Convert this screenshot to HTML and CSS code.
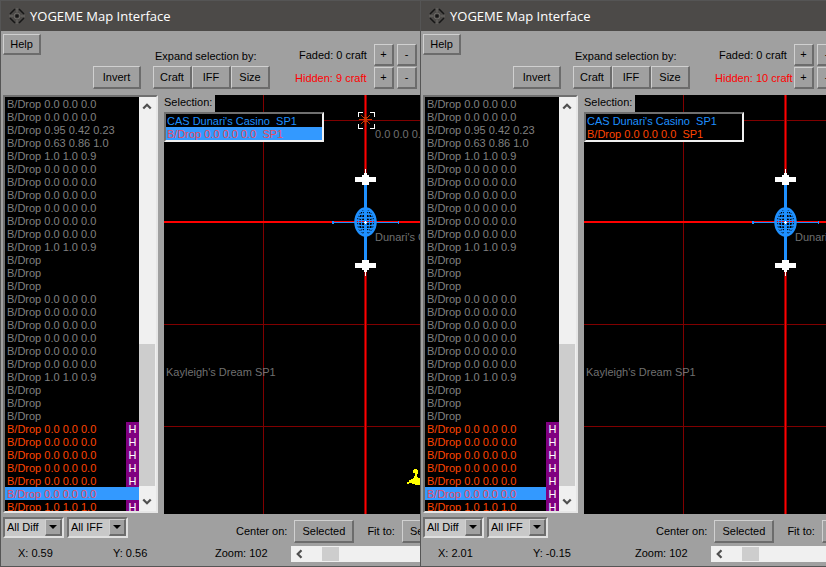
FILE: index.html
```
<!DOCTYPE html>
<html lang="en">
<head>
<meta charset="utf-8">
<title>YOGEME Map Interface</title>
<link rel="stylesheet" href="styles.css">
</head>
<body>
<svg width="0" height="0" class="defs" aria-hidden="true">
  <defs>
    <symbol id="logo" viewBox="0 0 16 16">
      <g fill="none" stroke="#161616" stroke-width="1.500">
        <path d="M6 1 L1 6 M10 1 L15 6 M1 10 L6 15 M15 10 L10 15"/>
      </g>
      <path d="M8 0v4M8 12v4M0 8h4M12 8h4" stroke="#6c6a66"/>
      <circle cx="8" cy="8" r="3" fill="none" stroke="#6c6a66"/>
      <circle cx="8" cy="8" r="1.800" fill="#161616"/>
    </symbol>
    <symbol id="chevron" viewBox="0 0 8 6"><path d="M1 5 L4 2 L7 5" fill="none" stroke="#505050" stroke-width="1.800"/></symbol>
    <symbol id="grid" viewBox="0 0 256 419">
      <g shape-rendering="crispEdges">
        <path d="M99.500 0V419M0 25.500H256M0 229.500H256M0 331.500H256" stroke="#800000"/>
        <path d="M201.500 0V419" stroke="#8b0000" stroke-width="3"/>
        <path d="M201.500 0V419" stroke="#f00"/>
        <path d="M0 127H256" stroke="#f00" stroke-width="2"/>
      </g>
    </symbol>
    <symbol id="station" viewBox="0 0 68 108">
      <g shape-rendering="crispEdges">
        <path d="M1 53.500H67" stroke="#1e90ff"/>
        <path d="M0 52h2v3h-2zM66 52h1v3h-1z" fill="#1e90ff"/>
        <path d="M33.500 12V94" stroke="#1e90ff" stroke-width="3"/>
        <path d="M23 8h7v-2h2v-2h3v2h2v2h7v5h-7v3h-7v-3h-7zM33 0h1v5h-1zM23 94h7v-3h7v3h7v5h-7v2h-2v2h-3v-2h-2v-2h-7zM33 102h1v5h-1z" fill="#fff"/>
      </g>
      <g fill="none" stroke="#1e90ff">
        <ellipse cx="33.500" cy="53" rx="10" ry="13.500" stroke-width="2.500"/>
        <ellipse cx="33.500" cy="53" rx="7" ry="14"/>
        <ellipse cx="33.500" cy="53" rx="4" ry="14"/>
        <ellipse cx="33.500" cy="53" rx="10" ry="4"/>
        <ellipse cx="33.500" cy="53" rx="10" ry="9"/>
        <path d="M26 42.500H41M25 45.500H42M24 48.500H43M24 51.500H43M24 56.500H43M25 59.500H42M26 62.500H41" shape-rendering="crispEdges"/>
      </g>
      <path d="M33 52h1v1h1v1h-1v1h-1v-1h-1v-1h1z" fill="#fff"/>
    </symbol>
  </defs>
</svg>
<main class="desk" id="desk"></main>
<template id="window">
  <section class="window">
    <header class="title"><svg class="logo"><use href="#logo"/></svg><h1>YOGEME Map Interface</h1></header>
    <div class="toolbar">
      <div class="left-tools"><button class="help">Help</button><button class="wide">Invert</button></div>
      <div class="expand"><span>Expand selection by:</span><div class="buttons"><button>Craft</button><button>IFF</button><button>Size</button></div></div>
      <div class="counts">
        <span class="faded">Faded: 0 craft</span><button>+</button><button>-</button>
        <span class="hidden-count"></span><button>+</button><button>-</button>
      </div>
    </div>
    <div class="content">
      <div class="list">
        <ul class="rows craft"></ul>
        <div class="scroll"><svg class="arrow"><use href="#chevron"/></svg><div class="thumb"></div><svg class="arrow down"><use href="#chevron"/></svg></div>
      </div>
      <div class="map">
        <svg class="canvas" width="256" height="419"></svg>
        <div class="selection"><span>Selection:</span><ul class="rows picked"><li class="blue">CAS Dunari's Casino&nbsp; SP1</li><li class="red">B/Drop 0.0 0.0 0.0&nbsp; SP1</li></ul></div>
      </div>
    </div>
    <footer>
      <div class="filters">
        <div class="combo"><select aria-label="Difficulty"><option>All Diff</option></select><i></i></div>
        <div class="combo"><select aria-label="IFF"><option>All IFF</option></select><i></i></div>
      </div>
      <div class="view"><span>Center on:</span><button>Selected</button><span class="fit">Fit to:</span><button>Selected</button></div>
      <div class="coords"><span class="x"></span><span class="y"></span></div>
      <div class="zoom"><span>Zoom: 102</span><div class="hscroll"><svg class="arrow back"><use href="#chevron"/></svg><div class="thumb"></div></div></div>
    </footer>
  </section>
</template>
<script src="app.js"></script>
</body>
</html>
```
FILE: styles.css
```
* { box-sizing: border-box; }
body { margin: 0; background: #a0a0a0; color: #000; font: 11px/13px "Liberation Sans", Arial, sans-serif; }
.defs { position: absolute; }
.desk { display: grid; grid-template-columns: 420fr 406fr; min-height: 100vh; overflow: hidden; }
.window { display: flex; flex-direction: column; min-width: 0; overflow: hidden; border: solid #555; border-width: 1px 0 1px 1px; background: #a0a0a0; white-space: nowrap; }
.title { display: flex; align-items: center; gap: 5px; height: 30px; padding-left: 8px; background: #4c4a48; color: #fff; }
.title h1 { margin: 0; font: 13px/18px "Open Sans", "Noto Sans", sans-serif; }
.logo { width: 16px; height: 16px; }
button { flex: none; height: 23px; padding: 0; border: solid; border-width: 1px 2px 2px 1px; border-color: #d0d0d0 #6c6c6c #6c6c6c #d0d0d0; background: #a0a0a0; color: #000; font: inherit; }
.toolbar { display: flex; flex: none; height: 64px; padding: 3px 0 6px 2px; align-items: flex-end; }
.left-tools { display: flex; flex: none; align-self: stretch; gap: 52px; width: 150px; align-items: flex-end; }
.help { align-self: flex-start; width: 38px; height: 21px; }
.wide { width: 48px; }
.expand { flex: none; width: 142px; }
.expand span { display: block; padding: 0 0 3px 2px; }
.buttons { display: flex; }
.buttons button { width: 39px; }
.counts { display: grid; flex: none; grid-template-columns: 76px 20px 20px; column-gap: 3px; align-items: center; row-gap: 1px; }
.counts button { height: 22px; }
.faded { padding-left: 4px; }
.hidden-count { color: #f00; }
.content { display: flex; flex: 1; min-height: 0; padding-left: 2px; }
.list { display: flex; flex: none; width: 155px; margin-right: 6px; height: 418px; border: 2px solid; border-color: #707070 #e6e6e6 #e6e6e6 #707070; background: #000; overflow: hidden; }
.rows { flex: 1; margin: 0; padding: 0; list-style: none; color: #808080; }
.rows li { display: flex; justify-content: space-between; height: 13px; padding-left: 2px; line-height: 15px; }
.rows .red { color: #ff4500; }
.rows .blue { color: #1e90ff; }
.rows .picked-row { background: #3399ff; color: #e84c60; }
.rows b { width: 13px; background: #800080; color: #fff; font-weight: normal; text-align: center; }
.scroll { display: flex; flex-direction: column; align-items: center; flex: none; width: 17px; padding: 5px 1px 5px 0; background: #f0f0f0; }
.arrow { flex: none; width: 10px; height: 8px; }
.down { transform: rotate(180deg); }
.back { transform: rotate(-90deg); }
.thumb { background: #cdcdcd; }
.scroll .thumb { width: 100%; height: 142px; margin: auto 0 12px; }
.map { position: relative; flex: 1; min-width: 0; overflow: hidden; background: #000; }
.canvas { display: block; font-size: 11px; }
.canvas text { fill: #707070; }
.selection { position: absolute; top: 0; left: 0; }
.selection span { display: inline-block; height: 17px; padding-right: 3px; line-height: 15px; background: #a0a0a0; }
.picked { width: 160px; border: 2px solid; border-color: #707070 #f0f0f0 #f0f0f0 #707070; background: #000; }
.rows.picked li { padding-left: 1px; }
footer { display: grid; flex: none; grid-template-columns: 206px 1fr; grid-template-rows: 32px 20px; padding-left: 2px; align-items: start; }
.filters { display: flex; gap: 3px; padding-top: 3px; }
.combo { display: flex; width: 61px; height: 21px; border: 2px solid; border-color: #707070 #e0e0e0 #e0e0e0 #707070; background: #c8c8c8; }
.combo select { flex: 1; min-width: 0; padding: 0 0 0 2px; border: 0; background: transparent; appearance: none; color: #000; font: inherit; }
.combo i { display: grid; place-items: center; width: 17px; border: solid; border-width: 1px 2px 2px 1px; border-color: #d0d0d0 #6c6c6c #6c6c6c #d0d0d0; background: #a0a0a0; pointer-events: none; }
.combo i::after { content: ""; border: 4px solid transparent; border-top-color: #000; border-bottom: 0; }
.view { display: flex; align-items: center; padding: 6px 0 0 27px; gap: 7px; }
.view button { width: 60px; }
.view .fit { padding-left: 6px; }
.coords { display: flex; padding: 1px 0 0 15px; }
.x { width: 95px; }
.zoom { display: flex; padding-left: 6px; }
.zoom > span { flex: none; width: 76px; padding-top: 1px; }
.hscroll { display: flex; align-items: center; flex: 1; height: 16px; padding-left: 3px; background: #f0f0f0; }
.hscroll .thumb { width: 17px; height: 14px; margin-left: 18px; }
```
FILE: app.js
```
const zeros = "B/Drop 0.0 0.0 0.0", ones = "B/Drop 1.0 1.0 0.9", bare = "B/Drop";
const craft = [zeros, zeros, "B/Drop 0.95 0.42 0.23", "B/Drop 0.63 0.86 1.0", ones,
  ...Array(6).fill(zeros), ones, bare, bare, bare, ...Array(6).fill(zeros), ones, bare, bare, bare];
const windows = [
  { hidden: 9, x: "0.59", y: "0.56", marked: true },
  { hidden: 10, x: "2.01", y: "-0.15", marked: false }
];
const reticle = `<g fill="none" shape-rendering="crispEdges"><path d="M194.500 22V17.500H199M206 17.500H210.500V22M210.500 29V33.500H206M199 33.500H194.500V29" stroke="#fff"/></g>
  <path d="M195 24.500H208M201.500 19V31M197 20L206 29M206 20L197 29" stroke="#c83200"/>
  <rect x="200" y="22" width="3" height="5" fill="#c83200"/>
  <text x="211" y="43">0.0 0.0 0.0</text>
  <path d="M249 375h1v-1h3v1h1v4h-1v3h1v1h2v7h-5v-1h-3v-1h-3v1h-2v-2h2v-2h2v-1h2v-1h1v-2h1v-3h-2z" fill="#ff0" shape-rendering="crispEdges"/>`;
for (const w of windows) {
  const node = document.getElementById("window").content.cloneNode(true);
  const find = s => node.querySelector(s);
  const hiddenRows = Array.from({ length: 7 }, (_, i) => {
    const picked = i === 5;
    const tag = picked ? "" : "<b>H</b>";
    return `<li class="red${picked ? " picked-row" : ""}">${i === 6 ? "B/Drop 1.0 1.0 1.0" : zeros}${picked && !w.marked ? "<b>H</b>" : tag}</li>`;
  });
  find(".craft").innerHTML = craft.map(c => `<li>${c}</li>`).join("") + hiddenRows.join("");
  find(".hidden-count").textContent = `Hidden: ${w.hidden} craft`;
  find(".x").textContent = `X: ${w.x}`;
  find(".y").textContent = `Y: ${w.y}`;
  find(".canvas").innerHTML = `<use href="#grid" width="256" height="419"/>
    <use href="#station" x="168" y="74" width="68" height="108"/>
    <text x="211" y="146">Dunari's Casino SP1</text><text x="2" y="281">Kayleigh's Dream SP1</text>${w.marked ? reticle : ""}`;
  if (w.marked) find(".picked li:last-child").classList.add("picked-row");
  document.getElementById("desk").append(node);
}
```
